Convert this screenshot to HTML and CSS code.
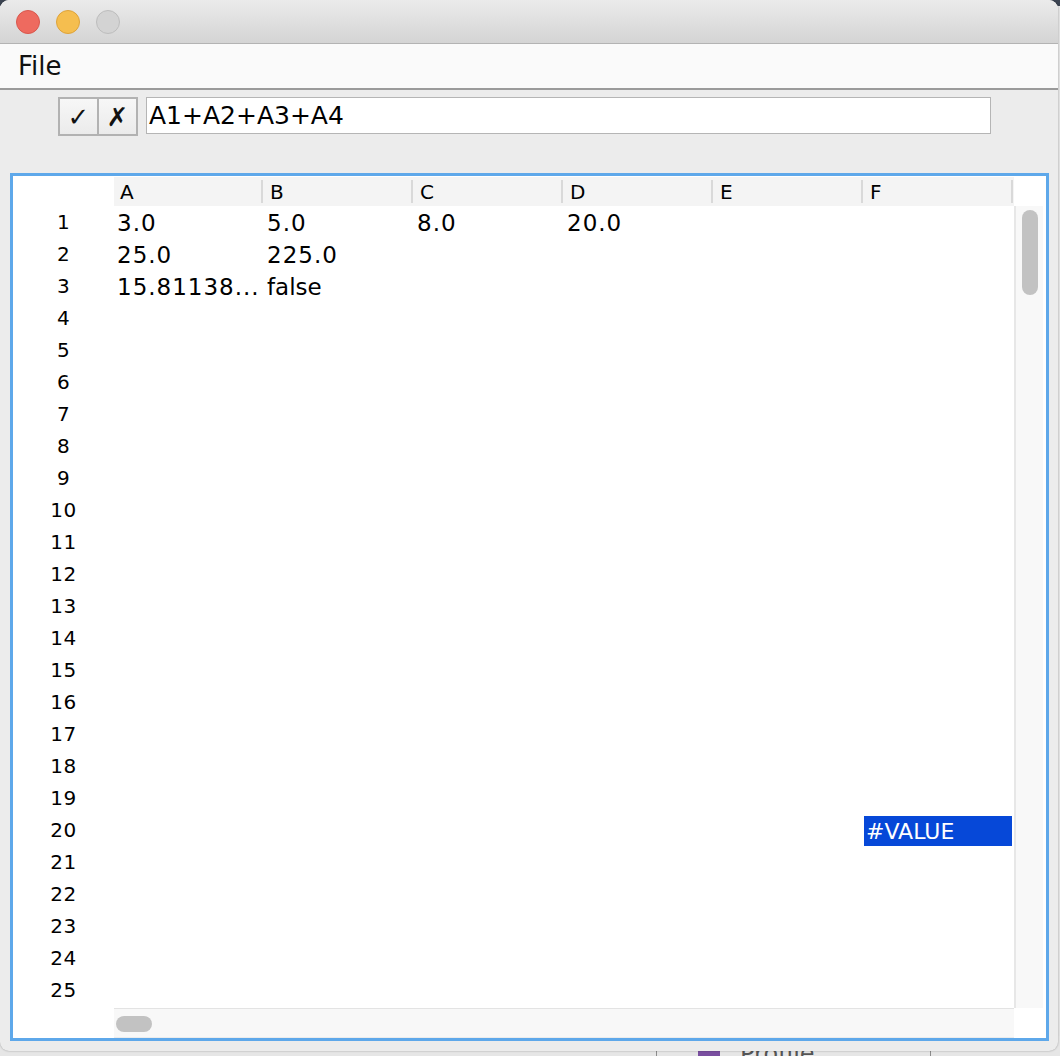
FILE: index.html
```html
<!DOCTYPE html>
<html>
<head>
<meta charset="utf-8">
<link rel="stylesheet" href="styles.css">
</head>
<body>
<div class="desktop">
  <div class="bg-app">
    <span class="bg-line bg-line-a"></span>
    <span class="bg-icon"></span>
    <span class="bg-text">Profile</span>
    <span class="bg-line bg-line-b"></span>
  </div>
</div>
<div class="window">
  <div class="titlebar">
    <span class="light red"></span>
    <span class="light yellow"></span>
    <span class="light gray"></span>
  </div>
  <div class="menubar"><span class="menu-item">File</span></div>
  <div class="toolbar">
    <div class="btn-group">
      <button class="tbtn">✓</button>
      <button class="tbtn">✗</button>
    </div>
    <div class="formula">A1+A2+A3+A4</div>
  </div>
  <div class="panel">
    <div class="corner"></div>
    <div class="col-header">
      <div class="hcell">A</div><div class="hcell">B</div><div class="hcell">C</div>
      <div class="hcell">D</div><div class="hcell">E</div><div class="hcell">F</div>
    </div>
    <div class="corner"></div>
    <div class="row-header">
      <div>1</div><div>2</div><div>3</div><div>4</div><div>5</div>
      <div>6</div><div>7</div><div>8</div><div>9</div><div>10</div>
      <div>11</div><div>12</div><div>13</div><div>14</div><div>15</div>
      <div>16</div><div>17</div><div>18</div><div>19</div><div>20</div>
      <div>21</div><div>22</div><div>23</div><div>24</div><div>25</div>
    </div>
    <div class="cells">
      <div class="row"><div class="cell num">3.0</div><div class="cell num">5.0</div><div class="cell num">8.0</div><div class="cell num">20.0</div></div>
      <div class="row"><div class="cell num">25.0</div><div class="cell num">225.0</div></div>
      <div class="row"><div class="cell num">15.81138...</div><div class="cell">false</div></div>
      <div class="row"></div><div class="row"></div><div class="row"></div><div class="row"></div>
      <div class="row"></div><div class="row"></div><div class="row"></div><div class="row"></div>
      <div class="row"></div><div class="row"></div><div class="row"></div><div class="row"></div>
      <div class="row"></div><div class="row"></div><div class="row"></div><div class="row"></div>
      <div class="row"><div class="cell"></div><div class="cell"></div><div class="cell"></div><div class="cell"></div><div class="cell"></div><div class="cell selected">#VALUE</div></div>
      <div class="row"></div><div class="row"></div><div class="row"></div><div class="row"></div><div class="row"></div>
    </div>
    <div class="vscroll"><div class="vthumb"></div></div>
    <div class="corner"></div>
    <div class="hscroll"><div class="hthumb"></div></div>
    <div class="corner"></div>
  </div>
</div>
</body>
</html>
```

FILE: styles.css
```css
html, body {
  margin: 0;
  padding: 0;
}
body {
  width: 1060px;
  height: 1056px;
  position: relative;
  overflow: hidden;
  background: linear-gradient(#3c4452 0, #3c4452 6px, #e4e4e4 6px);
  font-family: "DejaVu Sans", "Liberation Sans", sans-serif;
  color: #000;
}
.desktop {
  position: absolute;
  left: 0;
  top: 1036px;
  width: 1060px;
  height: 20px;
  background: #e6e6e6;
}
.bg-app {
  position: relative;
  height: 20px;
}
.bg-line {
  position: absolute;
  top: 0;
  width: 1px;
  height: 20px;
  background: #8c8c8c;
}
.bg-line-a { left: 656px; }
.bg-line-b { left: 930px; }
.bg-icon {
  position: absolute;
  left: 698px;
  top: 8px;
  width: 22px;
  height: 22px;
  border-radius: 4px;
  background: #7a4fa0;
}
.bg-text {
  position: absolute;
  left: 740px;
  top: 4px;
  font-size: 24px;
  line-height: 28px;
  color: #555;
}
.window {
  position: relative;
  z-index: 1;
  width: 1058px;
  height: 1051px;
  background: #ececec;
  border-radius: 9px;
  overflow: hidden;
  box-shadow: 0 0 2px rgba(0, 0, 0, 0.35);
}
.titlebar {
  height: 43px;
  background: linear-gradient(#ebebeb, #d4d4d4);
  border-bottom: 1px solid #b3b3b3;
  display: flex;
  align-items: center;
  padding-left: 16px;
  gap: 16px;
}
.light {
  width: 24px;
  height: 24px;
  border-radius: 50%;
  box-sizing: border-box;
}
.red { background: #ee6a5f; border: 1px solid #d9574d; }
.yellow { background: #f5be4f; border: 1px solid #dea33a; }
.gray { background: #d3d3d3; border: 1px solid #bdbdbd; }
.menubar {
  height: 44px;
  background: #fafafa;
  border-bottom: 2px solid #9a9a9a;
  display: flex;
  align-items: center;
  padding-left: 18px;
}
.menu-item {
  font-size: 26px;
  color: #111;
}
.toolbar {
  height: 83px;
  box-sizing: border-box;
  padding: 7px 0 0 58px;
  display: flex;
  align-items: flex-start;
  gap: 8px;
}
.btn-group {
  display: flex;
  border: 2px solid #b2b2b2;
  background: #b2b2b2;
  gap: 2px;
  height: 35px;
}
.tbtn {
  width: 37px;
  height: 35px;
  border: none;
  margin: 0;
  padding: 0;
  background: linear-gradient(#f7f7f7, #ebebeb);
  font-family: "DejaVu Sans", sans-serif;
  font-size: 26px;
  font-weight: bold;
  color: #111;
  display: flex;
  align-items: center;
  justify-content: center;
}
.formula {
  width: 845px;
  height: 37px;
  box-sizing: border-box;
  background: #fff;
  border: 1px solid #b5b5b5;
  font-size: 25px;
  line-height: 35px;
  padding-left: 2px;
  color: #000;
}
.panel {
  margin-left: 10px;
  width: 1039px;
  height: 868px;
  box-sizing: border-box;
  border: 3px solid #5ea8ea;
  background: #fff;
  display: grid;
  grid-template-columns: 101px 900px 32px;
  grid-template-rows: 30px 802px 30px;
}
.corner {
  background: #fff;
}
.col-header {
  display: flex;
  background: #f4f4f4;
  margin-top: 1px;
}
.hcell {
  width: 150px;
  box-sizing: border-box;
  font-size: 20px;
  padding-left: 6px;
  display: flex;
  align-items: center;
  position: relative;
}
.hcell::after {
  content: "";
  position: absolute;
  right: 1px;
  top: 3px;
  bottom: 3px;
  width: 2px;
  background: #d9d9d9;
}
.row-header div {
  height: 32px;
  display: flex;
  align-items: center;
  justify-content: center;
  font-size: 20px;
  letter-spacing: 0.5px;
}
.cells {
  overflow: hidden;
}
.row {
  height: 32px;
  display: grid;
  grid-template-columns: repeat(6, 150px);
}
.cell {
  font-size: 23px;
  padding-left: 3px;
  padding-top: 1px;
  display: flex;
  align-items: center;
  white-space: nowrap;
  overflow: hidden;
}
.cell.num {
  letter-spacing: 1px;
}
.cell.selected {
  background: #0648d8;
  color: #fff;
  margin: 2px 2px 0 0;
  padding-left: 2px;
  padding-top: 0;
  font-size: 22px;
}
.vscroll {
  background: #f8f8f8;
  border-left: 2px solid #e7e7e7;
  border-right: 3px solid #fff;
  padding: 4px 0 0 6px;
}
.vthumb {
  width: 16px;
  height: 85px;
  border-radius: 8px;
  background: #c2c2c2;
}
.hscroll {
  background: #f8f8f8;
  border-top: 1px solid #e3e3e3;
  border-bottom: 1px solid #ececec;
  padding: 7px 0 0 2px;
}
.hthumb {
  width: 36px;
  height: 16px;
  border-radius: 8px;
  background: #c2c2c2;
}
```
